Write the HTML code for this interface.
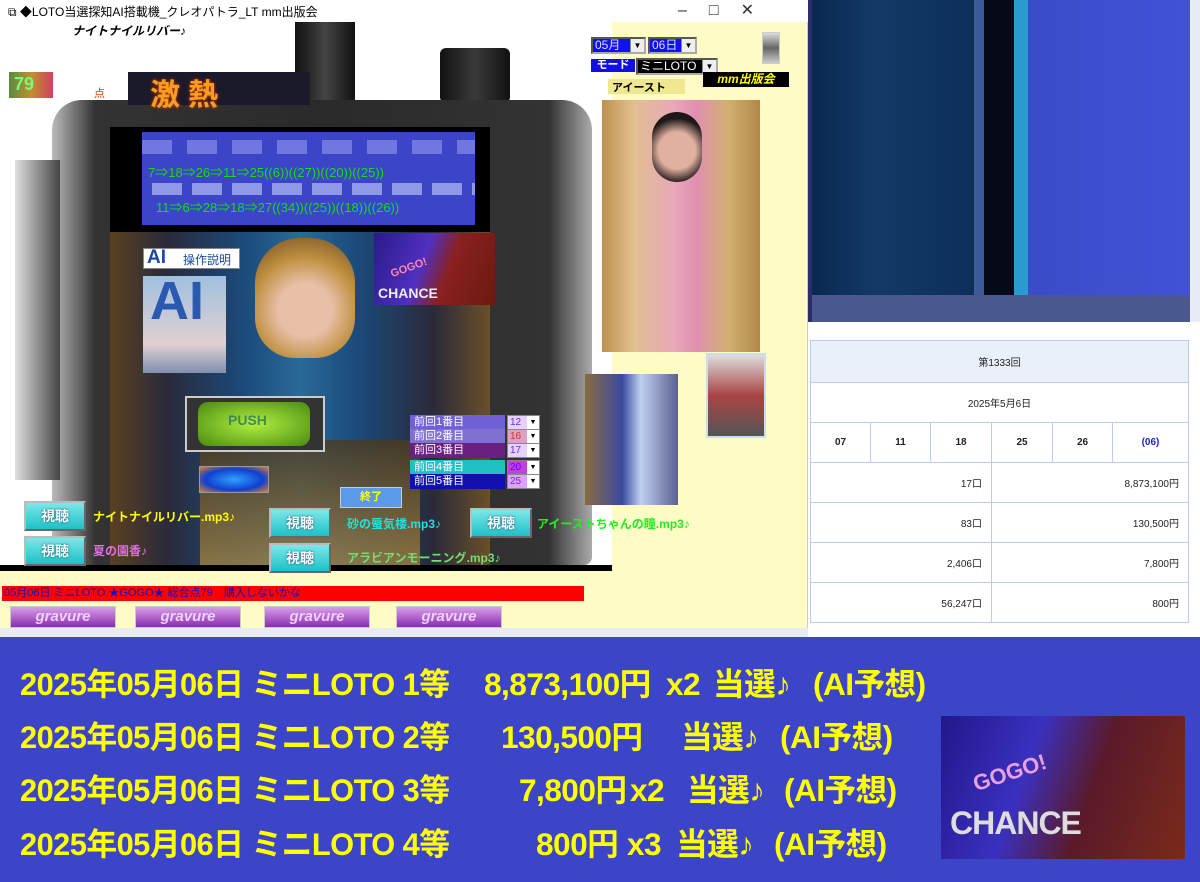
<!DOCTYPE html>
<html><head><meta charset="utf-8"><style>
*{margin:0;padding:0;box-sizing:border-box}
body{width:1200px;height:882px;overflow:hidden;background:#fff;position:relative;font-family:"Liberation Sans","Noto Sans CJK JP",sans-serif}
.a{position:absolute}
.sel{position:absolute;height:17px;border:2px inset #aaa;font-size:12px;line-height:13px;padding-left:2px}
.sel i{position:absolute;right:0;top:0;width:14px;height:13px;background:#eee;border-left:1px solid #888;font-style:normal;font-size:8px;text-align:center;color:#000}
.btn{position:absolute;width:62px;height:30px;background:linear-gradient(#7ce8e8,#1fc0c8);border:2px outset #bbb;color:#fff;font-weight:bold;font-size:14px;text-align:center;line-height:26px;text-shadow:0 0 2px #046}
.mp{position:absolute;font-size:12px;font-weight:bold}
.gr{position:absolute;width:106px;height:22px;background:linear-gradient(#d8a0e8,#8a2cb0);border:1px solid #ccc;color:#f0d0ff;font-weight:bold;font-size:15px;text-align:center;line-height:20px;font-style:italic}
.pv{position:absolute;left:410px;width:95px;height:15px;font-size:11px;color:#fff;padding-left:4px;line-height:15px}
.ps{position:absolute;left:507px;width:33px;height:15px;border:1px solid #888;font-size:10px;color:#63c;background:#e8d0ff;line-height:13px;padding-left:2px}
.ps i{position:absolute;right:0;top:0;width:12px;height:13px;background:#fff;font-style:normal;font-size:7px;color:#000;text-align:center}
td{border:1px solid #b8cdf0;font-size:10px;color:#222;height:40px}
.b{position:absolute;color:#ffff00;font-weight:bold;font-size:28px;white-space:pre;letter-spacing:-0.5px;line-height:34px;transform:scale(1.13,1.12);transform-origin:left center}
.b.f{transform:scale(1.1,1.12)}
</style></head><body>
<div class="a" style="left:808px;top:0;width:392px;height:322px;background:#2c2c6a"></div>
<div class="a" style="left:812px;top:0;width:162px;height:295px;background:linear-gradient(90deg,#0a2850,#123a66 40%,#0c2f58)"></div>
<div class="a" style="left:974px;top:0;width:10px;height:295px;background:#3a5a9a"></div>
<div class="a" style="left:984px;top:0;width:30px;height:295px;background:#050a18"></div>
<div class="a" style="left:1014px;top:0;width:14px;height:295px;background:#2a9ad0"></div>
<div class="a" style="left:1028px;top:0;width:162px;height:295px;background:linear-gradient(90deg,#3a4cc8,#4252d8)"></div>
<div class="a" style="left:812px;top:295px;width:378px;height:27px;background:#4a5890"></div>
<div class="a" style="left:1190px;top:0;width:10px;height:322px;background:#e8ecf4"></div>
<div class="a" style="left:808px;top:322px;width:392px;height:316px;background:#fff"></div>
<table class="a" style="left:810px;top:340px;width:379px;border-collapse:collapse;text-align:center">
<tr><td colspan="6" style="background:#eaf0fa;height:42px">第1333回</td></tr>
<tr><td colspan="6">2025年5月6日</td></tr>
<tr style="font-weight:bold"><td style="width:60px">07</td><td style="width:60px">11</td><td style="width:61px">18</td><td style="width:61px">25</td><td style="width:60px">26</td><td style="color:#22c">(06)</td></tr>
<tr><td colspan="3" style="text-align:right;padding-right:9px">17口</td><td colspan="3" style="text-align:right;padding-right:9px">8,873,100円</td></tr>
<tr><td colspan="3" style="text-align:right;padding-right:9px">83口</td><td colspan="3" style="text-align:right;padding-right:9px">130,500円</td></tr>
<tr><td colspan="3" style="text-align:right;padding-right:9px">2,406口</td><td colspan="3" style="text-align:right;padding-right:9px">7,800円</td></tr>
<tr><td colspan="3" style="text-align:right;padding-right:9px">56,247口</td><td colspan="3" style="text-align:right;padding-right:9px">800円</td></tr>
</table>

<div class="a" style="left:0;top:0;width:808px;height:637px;background:#fffbc4;border-right:1px solid #ccc"></div>
<div class="a" style="left:0;top:0;width:808px;height:22px;background:#fff"></div>
<div class="a" style="left:0;top:22px;width:612px;height:548px;background:#fff"></div>
<div class="a" style="left:8px;top:3px;font-size:12px;color:#000">⧉ ◆LOTO当選探知AI搭載機_クレオパトラ_LT mm出版会</div>
<div class="a" style="left:678px;top:0;font-size:16px;color:#333;letter-spacing:22px">–□✕</div>
<div class="a" style="left:72px;top:22px;font-size:12px;font-weight:bold;font-style:italic">ナイトナイルリバー♪</div>

<div class="a" style="left:295px;top:22px;width:60px;height:80px;background:linear-gradient(90deg,#111,#444,#111)"></div>
<div class="a" style="left:440px;top:48px;width:70px;height:55px;background:linear-gradient(90deg,#111,#3a3a3a,#111);border-radius:6px"></div>
<div class="a" style="left:52px;top:100px;width:540px;height:465px;background:linear-gradient(90deg,#bbb,#333 8%,#2a2a2a 50%,#333 92%,#aaa);border-radius:30px 30px 8px 8px"></div>
<div class="a" style="left:15px;top:160px;width:45px;height:320px;background:linear-gradient(90deg,#e0e0e0,#444)"></div>
<div class="a" style="left:110px;top:127px;width:380px;height:105px;background:#000"></div>
<div class="a" style="left:142px;top:132px;width:333px;height:93px;background:#3c44c8"></div>
<div class="a" style="left:142px;top:140px;width:333px;height:14px;background:repeating-linear-gradient(90deg,#7078e0 0 30px,#3c44c8 30px 45px)"></div>
<div class="a" style="left:142px;top:183px;width:333px;height:12px;background:repeating-linear-gradient(90deg,#3c44c8 0 10px,#9098e8 10px 40px)"></div>
<div class="a" style="left:148px;top:162px;font-size:13px;color:#10e010">7⇒18⇒26⇒11⇒25((6))((27))((20))((25))</div>
<div class="a" style="left:156px;top:197px;font-size:13px;color:#10e010">11⇒6⇒28⇒18⇒27((34))((25))((18))((26))</div>
<div class="a" style="left:110px;top:232px;width:380px;height:333px;background:linear-gradient(90deg,#5a4020,#2a2a3a 15%,#1a4a7a 35%,#2a6a9a 50%,#1a4a7a 65%,#2a2a3a 85%,#6a5028)"></div>
<div class="a" style="left:255px;top:238px;width:100px;height:120px;border-radius:45px 45px 40px 40px;background:radial-gradient(circle at 50% 60%,#e8c0a8 30%,#c09040 60%,#6a4a20)"></div>
<div class="a" style="left:200px;top:440px;width:220px;height:125px;background:linear-gradient(#4a3a20,#a08040);opacity:.8"></div>
<div class="a" style="left:0;top:565px;width:612px;height:6px;background:#000"></div>

<div class="a" style="left:9px;top:72px;width:44px;height:26px;background:linear-gradient(90deg,#5a8a40,#c09030,#d04060)"></div>
<div class="a" style="left:14px;top:74px;font-size:18px;color:#7f7;font-weight:bold">79</div>
<div class="a" style="left:94px;top:85px;font-size:11px;color:#c40">点</div>
<div class="a" style="left:128px;top:72px;width:182px;height:33px;background:#1a1a2a"></div>
<div class="a" style="left:150px;top:70px;font-size:30px;font-weight:bold;color:#f0a020;letter-spacing:8px;text-shadow:0 0 3px #f30">激熱</div>

<div class="a" style="left:143px;top:248px;width:97px;height:21px;background:#fff;border:1px solid #888"></div>
<div class="a" style="left:147px;top:247px;font-size:19px;font-weight:bold;color:#1a4aa0">AI</div>
<div class="a" style="left:183px;top:251px;font-size:12px;color:#1a4aa0">操作説明</div>
<div class="a" style="left:143px;top:276px;width:83px;height:97px;background:linear-gradient(#a0c0e0,#e0d0d0 70%,#8090b0)"></div>
<div class="a" style="left:150px;top:270px;font-size:54px;font-weight:bold;color:#2a5ab0">AI</div>
<div class="a" style="left:374px;top:233px;width:121px;height:72px;background:linear-gradient(110deg,#2a1a8a,#5030c0 40%,#8a2020 60%,#6a1a10)"></div>
<div class="a" style="left:378px;top:285px;font-size:14px;font-weight:bold;color:#eee">CHANCE</div>
<div class="a" style="left:390px;top:262px;font-size:11px;font-weight:bold;color:#f8a;transform:rotate(-20deg)">GOGO!</div>

<div class="a" style="left:185px;top:396px;width:140px;height:56px;background:#333;border:2px solid #ccc"></div>
<div class="a" style="left:198px;top:402px;width:112px;height:44px;background:radial-gradient(#b0f040,#4a8a10);border-radius:10px"></div>
<div class="a" style="left:228px;top:412px;font-size:14px;font-weight:bold;color:#485">PUSH</div>
<div class="a" style="left:199px;top:466px;width:70px;height:27px;background:radial-gradient(ellipse,#30a0ff,#1040d0 60%,#e08030);border:1px solid #999"></div>
<div class="a" style="left:340px;top:487px;width:62px;height:21px;background:#5a9ae8;border:1px solid #ccc;font-size:11px;color:#ff0;text-align:center;line-height:19px;font-weight:bold">終了</div>

<div class="pv" style="top:415px;background:#7060d8">前回1番目</div><div class="ps" style="top:415px">12<i>▼</i></div>
<div class="pv" style="top:429px;background:#8070d0">前回2番目</div><div class="ps" style="top:429px;color:#c33;background:#e0a0c0">16<i>▼</i></div>
<div class="pv" style="top:443px;background:#6a2080">前回3番目</div><div class="ps" style="top:443px">17<i>▼</i></div>
<div class="pv" style="top:460px;background:#20c0c0">前回4番目</div><div class="ps" style="top:460px;background:#c040e0;color:#60f">20<i>▼</i></div>
<div class="pv" style="top:474px;background:#1010b0">前回5番目</div><div class="ps" style="top:474px;background:#e0a0ff">25<i>▼</i></div>

<div class="btn" style="left:24px;top:501px">視聴</div>
<div class="btn" style="left:24px;top:536px">視聴</div>
<div class="btn" style="left:269px;top:508px">視聴</div>
<div class="btn" style="left:269px;top:543px">視聴</div>
<div class="btn" style="left:470px;top:508px">視聴</div>
<div class="mp" style="left:93px;top:508px;color:#ff0">ナイトナイルリバー.mp3♪</div>
<div class="mp" style="left:93px;top:542px;color:#e070e0">夏の園香♪</div>
<div class="mp" style="left:347px;top:515px;color:#20e0e0">砂の蜃気楼.mp3♪</div>
<div class="mp" style="left:347px;top:549px;color:#70e070">アラビアンモーニング.mp3♪</div>
<div class="mp" style="left:537px;top:515px;color:#20f020">アイーストちゃんの瞳.mp3♪</div>

<div class="a" style="left:2px;top:586px;width:582px;height:15px;background:#ff0000;font-size:11px;color:#1010c0;line-height:15px;padding-left:2px">05月06日 ミニLOTO ★GOGO★ 総合点79　購入しないかな</div>
<div class="gr" style="left:10px;top:606px">gravure</div>
<div class="gr" style="left:135px;top:606px">gravure</div>
<div class="gr" style="left:264px;top:606px">gravure</div>
<div class="gr" style="left:396px;top:606px">gravure</div>
<div class="a" style="left:0;top:628px;width:808px;height:9px;background:#e8ecf0"></div>

<div class="sel" style="left:591px;top:37px;width:55px;background:#1010f0;color:#ddf">05月<i>▼</i></div>
<div class="sel" style="left:648px;top:37px;width:49px;background:#1010f0;color:#ddf">06日<i>▼</i></div>
<div class="a" style="left:591px;top:59px;width:44px;height:13px;background:#1010e0;color:#fff;font-size:11px;font-weight:bold;text-align:center;line-height:13px">モード</div>
<div class="sel" style="left:636px;top:58px;width:82px;background:#000;color:#fff">ミニLOTO<i>▼</i></div>
<div class="a" style="left:608px;top:79px;width:77px;height:15px;background:#f0e890"></div>
<div class="a" style="left:612px;top:79px;font-size:11px;font-weight:bold">アイースト</div>
<div class="a" style="left:703px;top:72px;width:86px;height:15px;background:#000;color:#ff0;font-size:12px;font-weight:bold;font-style:italic;text-align:center;line-height:15px">mm出版会</div>
<div class="a" style="left:762px;top:32px;width:18px;height:32px;background:linear-gradient(#ddd,#666,#ccc);border:1px solid #ccc"></div>
<div class="a" style="left:602px;top:100px;width:158px;height:252px;background:linear-gradient(90deg,#c09050,#e0c090 20%,#e8a8b8 45%,#e090b0 60%,#d0b070 80%,#b08848)"></div>
<div class="a" style="left:652px;top:112px;width:50px;height:70px;border-radius:25px;background:radial-gradient(circle at 50% 55%,#e0b0a0 40%,#201818 70%)"></div>
<div class="a" style="left:585px;top:374px;width:93px;height:131px;background:linear-gradient(90deg,#8a6a40,#3a4aa0 40%,#c0d0f0 60%,#5a6090)"></div>
<div class="a" style="left:706px;top:353px;width:60px;height:85px;background:linear-gradient(#ddd,#a44 50%,#555);border:2px solid #cde"></div>

<div class="a" style="left:0;top:637px;width:1200px;height:245px;background:#3c44c8"></div>
<div class="b f" style="left:20px;top:668px">2025年05月06日 ミニLOTO 1等</div>
<div class="b" style="left:484px;top:668px">8,873,100円</div><div class="b" style="left:666px;top:668px">x2</div><div class="b" style="left:713px;top:668px">当選♪</div><div class="b" style="left:813px;top:668px">(AI予想)</div>
<div class="b f" style="left:20px;top:721px">2025年05月06日 ミニLOTO 2等</div>
<div class="b" style="left:501px;top:721px">130,500円</div><div class="b" style="left:681px;top:721px">当選♪</div><div class="b" style="left:780px;top:721px">(AI予想)</div>
<div class="b f" style="left:20px;top:774px">2025年05月06日 ミニLOTO 3等</div>
<div class="b" style="left:519px;top:774px">7,800円</div><div class="b" style="left:630px;top:774px">x2</div><div class="b" style="left:687px;top:774px">当選♪</div><div class="b" style="left:784px;top:774px">(AI予想)</div>
<div class="b f" style="left:20px;top:828px">2025年05月06日 ミニLOTO 4等</div>
<div class="b" style="left:536px;top:828px">800円</div><div class="b" style="left:627px;top:828px">x3</div><div class="b" style="left:676px;top:828px">当選♪</div><div class="b" style="left:774px;top:828px">(AI予想)</div>
<div class="a" style="left:941px;top:716px;width:244px;height:143px;background:linear-gradient(110deg,#20188a,#3a30c0 35%,#5a1a2a 60%,#7a2a1a)"></div>
<div class="a" style="left:950px;top:805px;font-size:32px;font-weight:bold;color:#ddd;letter-spacing:-1px">CHANCE</div>
<div class="a" style="left:972px;top:760px;font-size:22px;font-weight:bold;color:#e8a0e0;transform:rotate(-18deg)">GOGO!</div>
</body></html>
